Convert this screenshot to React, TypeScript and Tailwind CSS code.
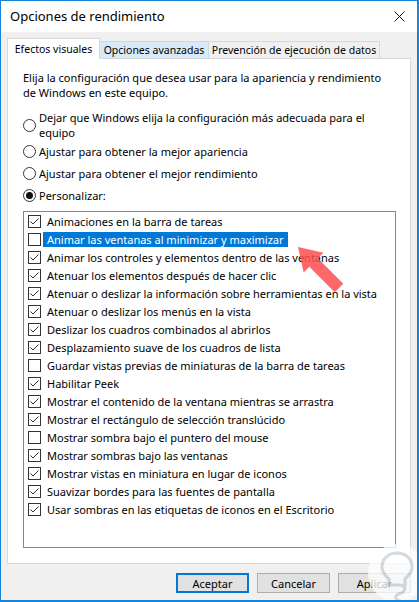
import React from 'react';

const items: { label: string; checked: boolean; selected?: boolean }[] = [
  { label: 'Animaciones en la barra de tareas', checked: true },
  { label: 'Animar las ventanas al minimizar y maximizar', checked: false, selected: true },
  { label: 'Animar los controles y elementos dentro de las ventanas', checked: true },
  { label: 'Atenuar los elementos después de hacer clic', checked: true },
  { label: 'Atenuar o deslizar la información sobre herramientas en la vista', checked: true },
  { label: 'Atenuar o deslizar los menús en la vista', checked: true },
  { label: 'Deslizar los cuadros combinados al abrirlos', checked: true },
  { label: 'Desplazamiento suave de los cuadros de lista', checked: true },
  { label: 'Guardar vistas previas de miniaturas de la barra de tareas', checked: false },
  { label: 'Habilitar Peek', checked: true },
  { label: 'Mostrar el contenido de la ventana mientras se arrastra', checked: true },
  { label: 'Mostrar el rectángulo de selección translúcido', checked: true },
  { label: 'Mostrar sombra bajo el puntero del mouse', checked: false },
  { label: 'Mostrar sombras bajo las ventanas', checked: true },
  { label: 'Mostrar vistas en miniatura en lugar de iconos', checked: true },
  { label: 'Suavizar bordes para las fuentes de pantalla', checked: true },
  { label: 'Usar sombras en las etiquetas de iconos en el Escritorio', checked: true },
];

const Radio = ({ on }: { on?: boolean }) => (
  <span className="w-[13px] h-[13px] shrink-0 rounded-full border border-[#333] bg-white flex items-center justify-center">
    {on && <span className="w-[7px] h-[7px] rounded-full bg-[#111]" />}
  </span>
);

const Check = ({ on }: { on: boolean }) => (
  <span className="w-[13px] h-[13px] shrink-0 border border-[#333] bg-white">
    {on && (
      <svg width="11" height="11" viewBox="0 0 11 11">
        <polyline points="1.5,5.5 4,8 9.5,2.5" fill="none" stroke="#333" strokeWidth="1" />
      </svg>
    )}
  </span>
);

export default function App() {
  return (
    <div className="relative w-[419px] h-[602px] bg-[#f0f0f0] border-t border-l border-r-2 border-b-2 border-[#1883d7] flex flex-col text-black text-[11px] leading-[15px] font-['Noto_Sans',sans-serif] overflow-hidden">
      {/* Title bar */}
      <div className="h-[31px] bg-white flex items-center justify-between pl-[9px] pr-[12px] shrink-0">
        <span className="text-[13px]">Opciones de rendimiento</span>
        <svg width="11" height="11" viewBox="0 0 11 11">
          <path d="M0.5 0.5 L10.5 10.5 M10.5 0.5 L0.5 10.5" stroke="#111" strokeWidth="1" />
        </svg>
      </div>

      {/* Tabs */}
      <div className="pt-[6px] px-[6px] shrink-0">
        <div className="flex items-end h-[20px] whitespace-nowrap text-[10.5px]">
          <div className="relative z-10 -mb-px w-[93px] h-[21px] bg-white border-t border-x border-[#d9d9d9] flex items-center justify-center">
            Efectos visuales
          </div>
          <div className="w-[109px] h-[17px] bg-[#d8eaf9] border-t border-r border-[#c0dcf3] flex items-center justify-center">
            Opciones avanzadas
          </div>
          <div className="w-[171px] h-[17px] bg-[#f0f0f0] border-t border-r border-[#d9d9d9] flex items-center justify-center">
            Prevención de ejecución de datos
          </div>
        </div>
      </div>

      {/* Panel */}
      <div className="mx-[6px] h-[506px] shrink-0 bg-white border border-[#d9d9d9] pt-[11px] pl-[15px] flex flex-col">
        <p className="whitespace-nowrap">
          Elija la configuración que desea usar para la apariencia y rendimiento
          <br />
          de Windows en este equipo.
        </p>

        <div className="mt-[10px] flex flex-col gap-[4px]">
          <div className="flex items-center gap-[3px]">
            <Radio />
            <span className="whitespace-nowrap">
              Dejar que Windows elija la configuración más adecuada para el
              <br />
              equipo
            </span>
          </div>
          <div className="flex flex-col gap-[7px]">
            <div className="flex items-center gap-[3px]">
              <Radio />
              <span>Ajustar para obtener la mejor apariencia</span>
            </div>
            <div className="flex items-center gap-[3px]">
              <Radio />
              <span>Ajustar para obtener el mejor rendimiento</span>
            </div>
            <div className="flex items-center gap-[3px]">
              <Radio on />
              <span>Personalizar:</span>
            </div>
          </div>
        </div>

        <div className="mt-[8px] w-[373px] h-[337px] border border-[#828790] bg-white">
          {items.map((it) => (
            <div key={it.label} className="h-[18px] flex items-center pl-[4px] gap-[2px]">
              <Check on={it.checked} />
              <span
                className={
                  it.selected
                    ? 'h-[15px] px-[4px] flex items-center bg-[#0078d7] text-white whitespace-nowrap'
                    : 'px-[4px] whitespace-nowrap'
                }
              >
                {it.label}
              </span>
            </div>
          ))}
        </div>
      </div>

      {/* Buttons */}
      <div className="mt-[9px] flex justify-end gap-[8px] pr-[6px]">
        <button className="w-[73px] h-[20px] bg-[#e1e1e1] border-2 border-[#0078d7] flex items-center justify-center">
          Aceptar
        </button>
        <button className="w-[73px] h-[20px] bg-[#e1e1e1] border border-[#adadad] flex items-center justify-center">
          Cancelar
        </button>
        <button className="w-[73px] h-[20px] bg-[#e1e1e1] border border-[#adadad] flex items-center justify-center">
          Aplicar
        </button>
      </div>

      {/* Overlays: arrow + watermark */}
      <svg className="absolute inset-0 pointer-events-none" width="419" height="602" viewBox="0 0 419 602">
        <g transform="translate(297 246) rotate(-45)" opacity="0.85">
          <polygon points="0,0 -14,22 -6,22 -6,58 6,58 6,22 14,22" fill="#ff4d4d" />
        </g>
        <g opacity="0.75">
          <circle cx="396" cy="572" r="29" fill="#ffffff" />
          <path
            d="M396 552 c-10 0 -15 7 -15 14 c0 6 4 9 7 12 l0 6 l11 0 c4 0 6 3 4 6 c-2 3 -6 2 -8 5 c-1 2 1 5 4 5"
            fill="none"
            stroke="#c5d0d8"
            strokeWidth="3"
            strokeLinecap="round"
          />
          <path d="M396 552 c10 0 15 7 15 14 c0 6 -4 9 -7 12 l0 6" fill="none" stroke="#c5d0d8" strokeWidth="3" strokeLinecap="round" />
        </g>
      </svg>
    </div>
  );
}
